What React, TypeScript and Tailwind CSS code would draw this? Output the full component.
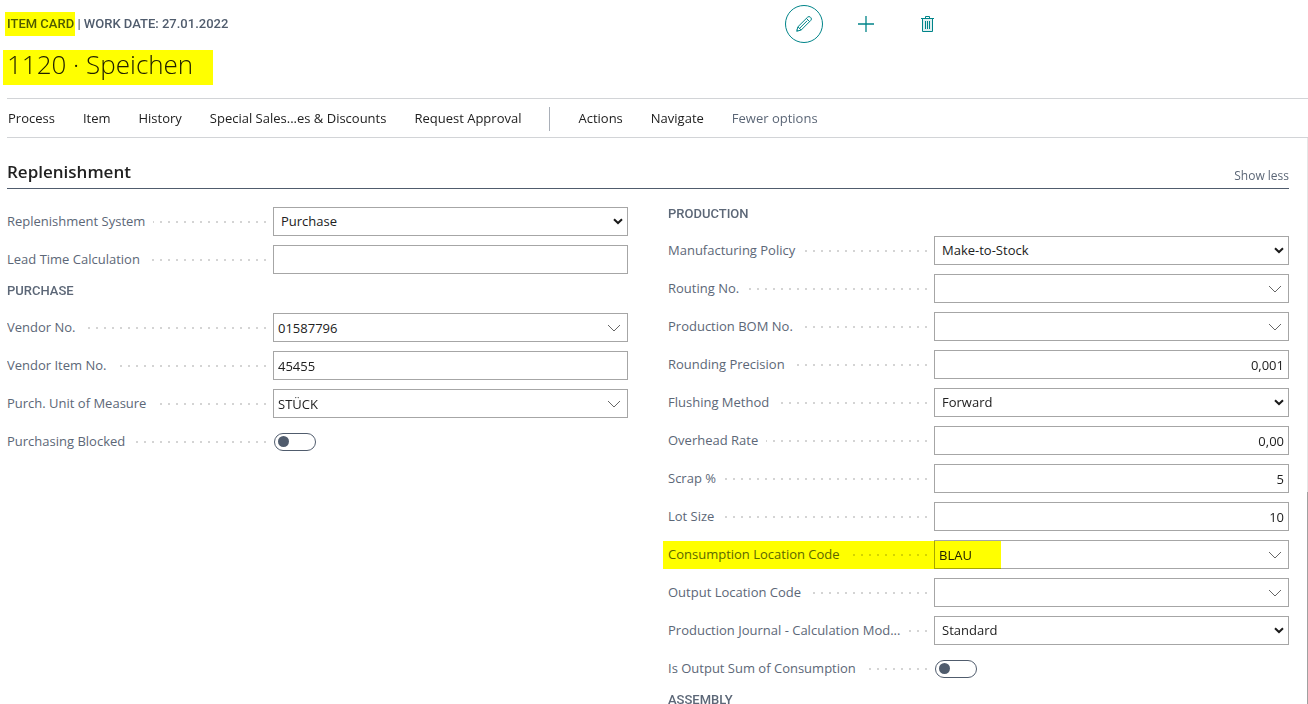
import { FC, ReactNode, useState } from "react";

type FieldKind = "text" | "number" | "lookup" | "select" | "toggle";

interface FieldProps {
  id: string;
  label: string;
  kind: FieldKind;
  value?: string;
  highlighted?: boolean;
}

const purchaseSystem: FieldProps[] = [
  { id: "replenishment-system", label: "Replenishment System", kind: "select", value: "Purchase" },
  { id: "lead-time", label: "Lead Time Calculation", kind: "text" },
];

const purchase: FieldProps[] = [
  { id: "vendor-no", label: "Vendor No.", kind: "lookup", value: "01587796" },
  { id: "vendor-item-no", label: "Vendor Item No.", kind: "text", value: "45455" },
  { id: "purch-unit", label: "Purch. Unit of Measure", kind: "lookup", value: "STÜCK" },
  { id: "purchasing-blocked", label: "Purchasing Blocked", kind: "toggle" },
];

const production: FieldProps[] = [
  { id: "manufacturing-policy", label: "Manufacturing Policy", kind: "select", value: "Make-to-Stock" },
  { id: "routing-no", label: "Routing No.", kind: "lookup" },
  { id: "production-bom", label: "Production BOM No.", kind: "lookup" },
  { id: "rounding-precision", label: "Rounding Precision", kind: "number", value: "0,001" },
  { id: "flushing-method", label: "Flushing Method", kind: "select", value: "Forward" },
  { id: "overhead-rate", label: "Overhead Rate", kind: "number", value: "0,00" },
  { id: "scrap", label: "Scrap %", kind: "number", value: "5" },
  { id: "lot-size", label: "Lot Size", kind: "number", value: "10" },
  { id: "consumption-location", label: "Consumption Location Code", kind: "lookup", value: "BLAU", highlighted: true },
  { id: "output-location", label: "Output Location Code", kind: "lookup" },
  { id: "journal-mode", label: "Production Journal - Calculation Mod...", kind: "select", value: "Standard" },
  { id: "output-sum", label: "Is Output Sum of Consumption", kind: "toggle" },
];

const menuItems = ["Process", "Item", "History", "Special Sales...es & Discounts", "Request Approval"];

const inputClass =
  "block h-[29px] w-full appearance-none rounded-none border border-[#a6a6a6] bg-white text-[13px] text-[#212121] outline-none focus:border-[#008489]";

const Marker: FC<{ className: string }> = ({ className }) => (
  <span
    aria-hidden="true"
    className={`pointer-events-none absolute bg-[#ffff00] mix-blend-multiply ${className}`}
  />
);

const Toggle: FC<{ id: string }> = ({ id }) => {
  const [on, setOn] = useState(false);

  return (
    <div className="relative ml-px flex h-[18px] w-[42px] items-center rounded-full border border-[#505c6d] px-[3px]">
      <input
        id={id}
        type="checkbox"
        role="switch"
        checked={on}
        onChange={() => setOn(!on)}
        className="absolute inset-0 m-0 cursor-pointer appearance-none"
      />
      <span
        className={`pointer-events-none size-[11px] rounded-full bg-[#505c6d] ${on ? "ml-auto" : ""}`}
      />
    </div>
  );
};

const Control: FC<FieldProps> = ({ id, label, kind, value = "" }) => {
  if (kind === "toggle") return <Toggle id={id} />;

  if (kind === "select") {
    return (
      <>
        <select id={id} defaultValue={value} className={`${inputClass} pl-[7px] pr-6`}>
          <option>{value}</option>
        </select>
        <svg
          className="pointer-events-none absolute right-[5px] top-[11px]"
          width="10"
          height="7"
          viewBox="0 0 10 7"
          fill="none"
          stroke="#1a1a1a"
          strokeWidth="2"
        >
          <path d="M1 1.2 5 5l4-3.8" />
        </svg>
      </>
    );
  }

  return (
    <>
      <input
        id={id}
        type="text"
        defaultValue={value}
        className={`${inputClass} px-1 ${kind === "number" ? "text-right" : ""}`}
      />
      {kind === "lookup" && (
        <button
          type="button"
          aria-label={`Choose a value for ${label}`}
          className="absolute right-px top-px flex h-[27px] w-[26px] items-center justify-center"
        >
          <svg width="14" height="8" viewBox="0 0 14 8" fill="none" stroke="#666" strokeWidth="1">
            <path d="m1 1 6 6 6-6" />
          </svg>
        </button>
      )}
    </>
  );
};

const Field: FC<FieldProps> = (props) => (
  <div className="relative flex h-[29px] items-center">
    {/* Dotted leader runs behind the label */}
    <div className="mr-px flex h-full w-[265px] shrink-0 items-center bg-[linear-gradient(to_right,#d4d4d4_2px,transparent_2px)] bg-[length:8px_2px] bg-[position:right_14px] bg-repeat-x">
      <label htmlFor={props.id} className="whitespace-nowrap bg-white pr-2 text-[13px] text-[#5c6777]">
        {props.label}
      </label>
    </div>
    <div className="relative min-w-0 flex-1">
      <Control {...props} />
    </div>
    {props.highlighted && <Marker className="-left-[5px] top-px h-7 w-[338px]" />}
  </div>
);

const GroupTitle: FC<{ children: ReactNode }> = ({ children }) => (
  <h3 className="h-[21px] font-['Roboto',sans-serif] text-[13px] font-medium leading-4 text-[#5c6777]">
    {children}
  </h3>
);

const App: FC = () => {
  return (
    <div className="flex h-screen flex-col overflow-hidden bg-white font-['Open_Sans','Noto_Sans',sans-serif] text-[#212121]">
      {/* Header */}
      <header>
        <div className="flex h-12 items-center">
          <p className="w-3/5 pl-[7px] font-['Roboto',sans-serif] text-[13px] font-medium leading-5 text-[#505c6d]">
            <span className="relative">
              ITEM CARD
              <Marker className="-left-0.5 -right-px -top-1 h-6" />
            </span>{" "}
            | WORK DATE: 27.01.2022
          </p>
          <div className="flex items-center gap-6 text-[#008489]">
            <button
              type="button"
              aria-label="Edit"
              className="flex size-[38px] items-center justify-center rounded-full border border-[#008489]"
            >
              <svg width="16" height="16" viewBox="0 0 16 16" fill="none" stroke="currentColor">
                <path d="m.7 15.3 1.200-4.500L11.600 1.200a2 2 0 0 1 2.800 0l.4.400a2 2 0 0 1 0 2.800L5.200 14z" />
                <path d="M1.900 10.800 5.200 14M10.400 2.400l3.200 3.200M3.500 12.400l7.700-7.700M1 13.700l1.300 1.300" />
              </svg>
            </button>
            <button type="button" aria-label="New" className="flex size-[38px] items-center justify-center">
              <svg width="16" height="16" viewBox="0 0 16 16" fill="none" stroke="currentColor" strokeWidth="1.3">
                <path d="M8 0v16M0 8h16" />
              </svg>
            </button>
            <button type="button" aria-label="Delete" className="flex size-[38px] items-center justify-center">
              <svg width="13" height="16" viewBox="0 0 13 16" fill="none" stroke="currentColor">
                <path d="M1.5 2.5h10v13h-10z" fill="#e0f0f1" />
                <path d="M0 2.5h13M4.5 2.5v-2h4v2M4.5 5v8M6.5 5v8M8.500 5v8" />
              </svg>
            </button>
          </div>
        </div>
        <div className="h-[50px] pl-[7px]">
          <h1 className="relative inline-block text-[26px] font-light leading-8">
            1120 · Speichen
            <Marker className="-left-1 -right-5 top-0.5 h-[35px]" />
          </h1>
        </div>
      </header>

      {/* Action bar */}
      <nav className="ml-[7px] flex h-10 shrink-0 items-center gap-7 whitespace-nowrap border-y border-[#d2d4d7] pl-px pt-0.5 text-[13px]">
        {menuItems.map((item) => (
          <button key={item} type="button">
            {item}
          </button>
        ))}
        <span className="h-6 w-px bg-[#a9afb8]" />
        <button type="button">Actions</button>
        <button type="button">Navigate</button>
        <button type="button" className="text-[#5c6777]">
          Fewer options
        </button>
      </nav>

      <div className="flex min-h-0 flex-1">
        <main className="min-w-0 flex-1 overflow-hidden pl-[7px] pr-[18px]">
          {/* Replenishment tab */}
          <div className="flex h-[51px] items-end justify-between border-b border-[#505c6d] pb-1">
            <h2 className="text-[17px] font-semibold leading-6">Replenishment</h2>
            <button type="button" className="text-xs leading-4 text-[#5c6777]">
              Show less
            </button>
          </div>

          <div className="grid grid-cols-2 gap-10 pt-[17px]">
            <div className="flex flex-col gap-[9px] pt-px">
              {purchaseSystem.map((field) => (
                <Field key={field.id} {...field} />
              ))}
              <GroupTitle>PURCHASE</GroupTitle>
              {purchase.map((field) => (
                <Field key={field.id} {...field} />
              ))}
            </div>
            <div className="flex flex-col gap-[9px]">
              <GroupTitle>PRODUCTION</GroupTitle>
              {production.map((field) => (
                <Field key={field.id} {...field} />
              ))}
              <GroupTitle>ASSEMBLY</GroupTitle>
            </div>
          </div>
        </main>
        {/* Scroll bar */}
        <div className="flex w-px flex-col bg-[#e6e6e6]">
          <div className="flex-[5]" />
          <div className="flex-[3] bg-[#a0a0a0]" />
        </div>
      </div>
    </div>
  );
};

export default App;
